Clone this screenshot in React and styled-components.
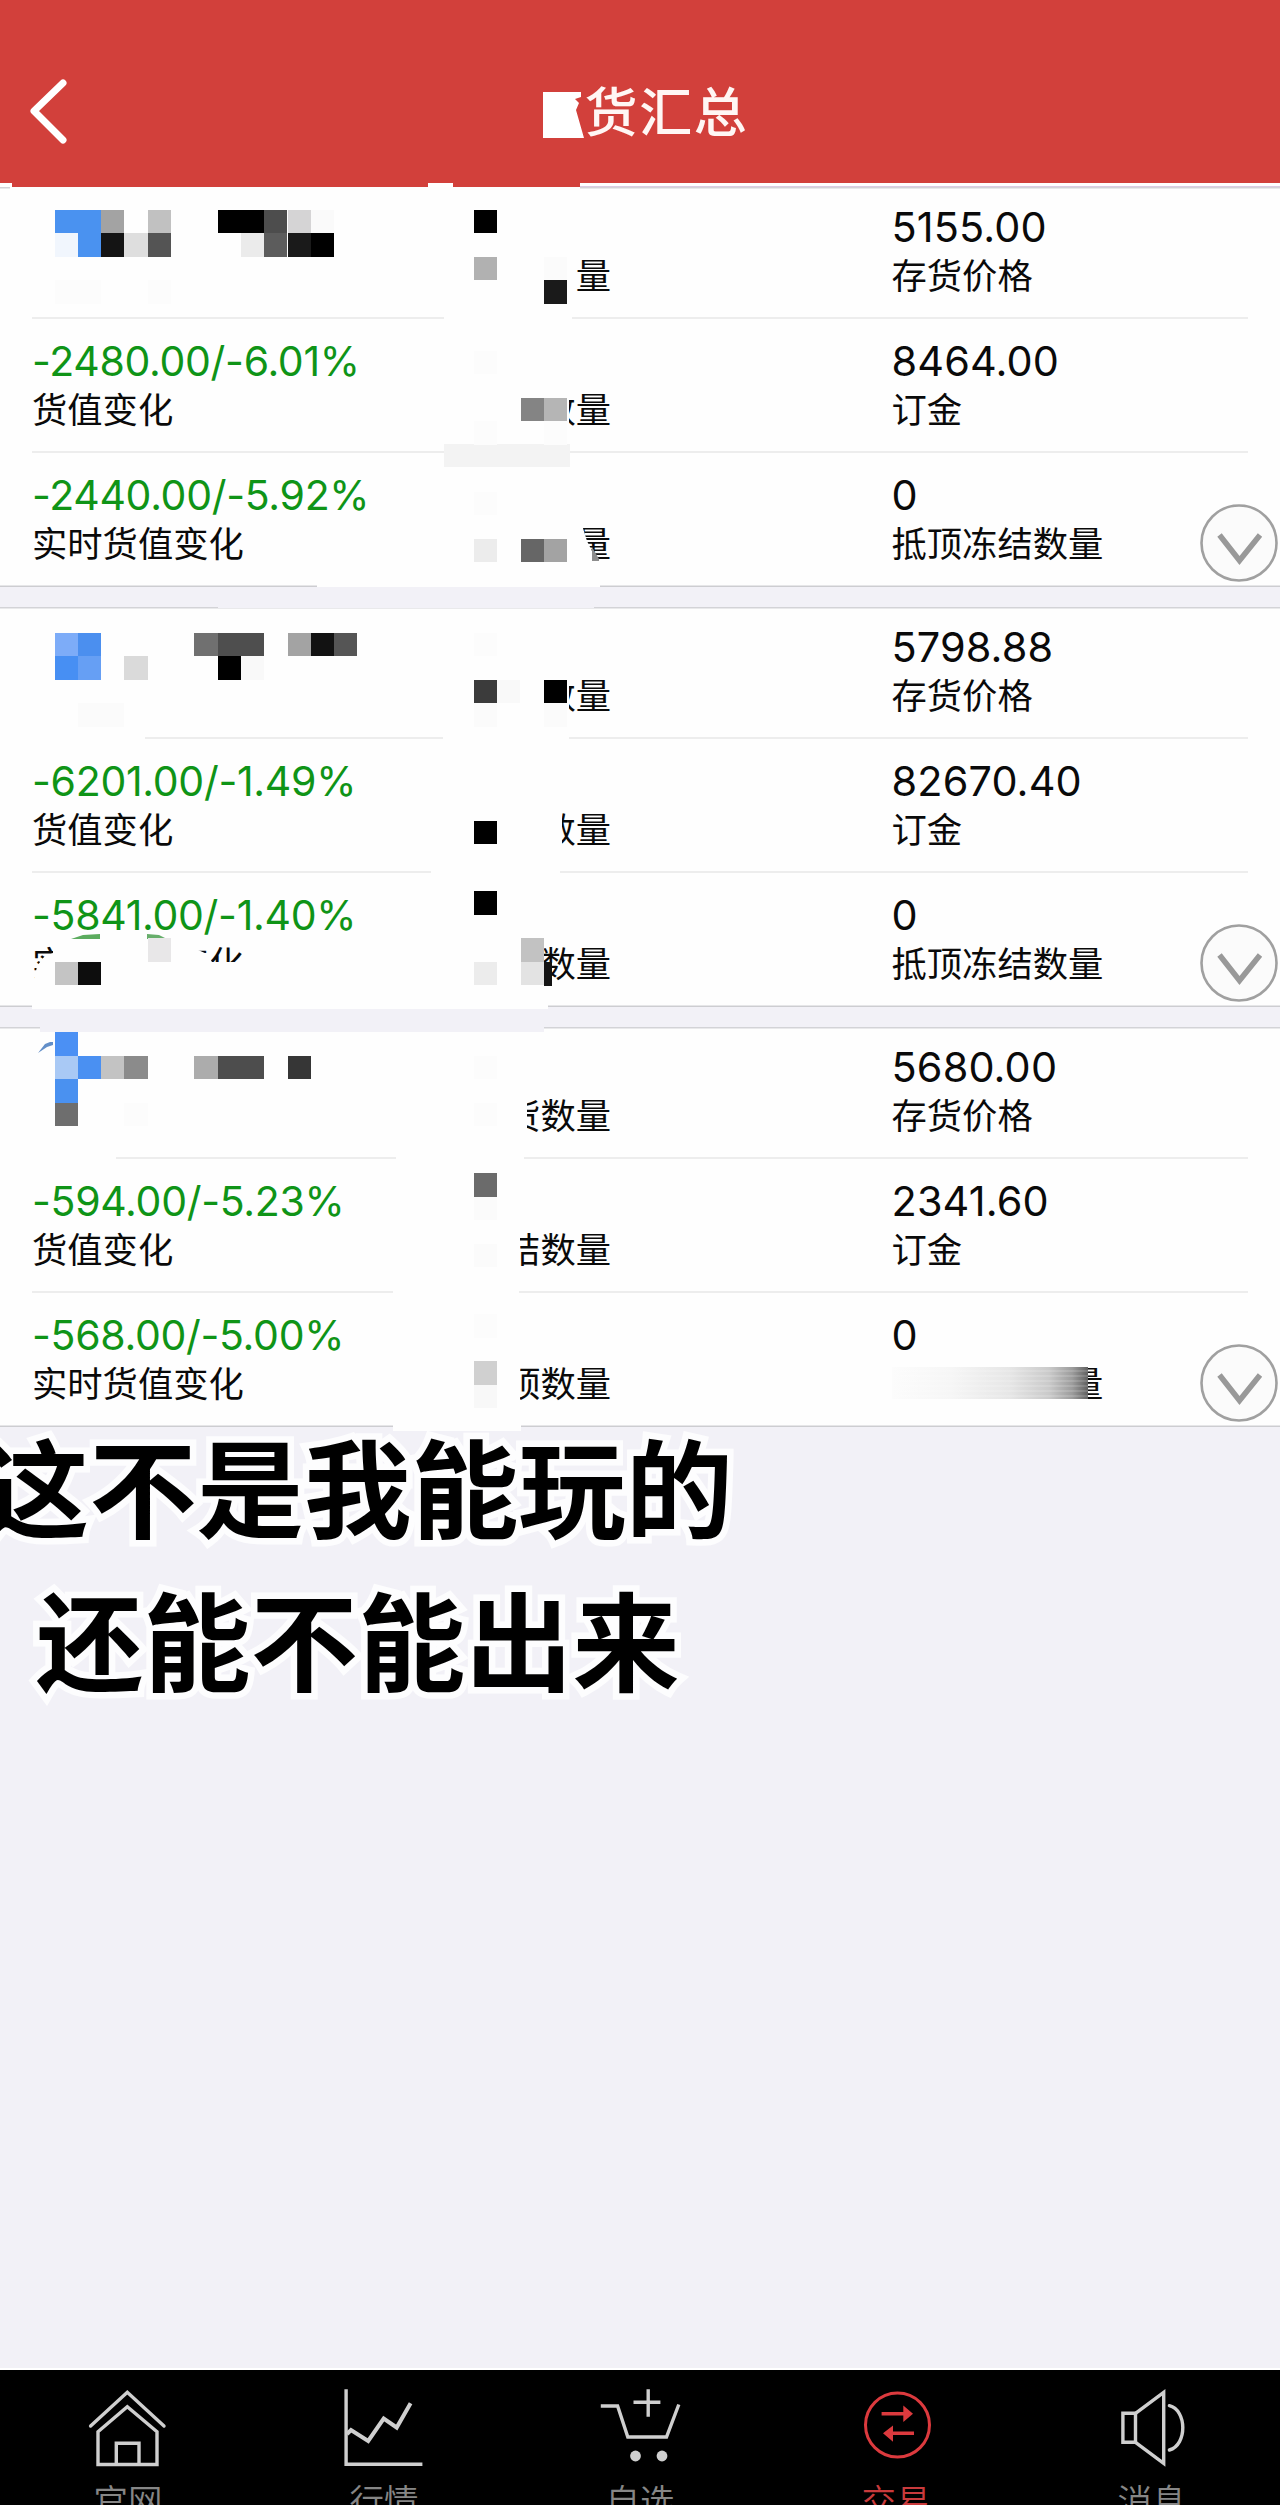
import React from 'react';
import styled, { createGlobalStyle, css } from 'styled-components';

const GlobalStyle = createGlobalStyle`
  *, *::before, *::after { box-sizing: border-box; }
  body {
    margin: 0;
    background: #f2f1f7;
    font-family: Inter, "Noto Sans CJK SC", sans-serif;
  }
`;

const Page = styled.div`
  position: relative;
  display: flex;
  flex-direction: column;
  width: 1280px;
  height: 2505px;
  overflow: hidden;
  background: #f2f1f7;
`;

const Header = styled.header`
  display: grid;
  grid-template-columns: 100px 1fr 100px;
  align-items: center;
  height: 187px;
  flex: none;
  padding-top: 36px;
  background: #d2403b;
`;

const BackButton = styled.button`
  display: flex;
  width: 60px;
  height: 70px;
  margin-left: 19px;
  padding: 0;
  border: 0;
  background: none;
`;

const Title = styled.h1`
  margin: -5px 0 0;
  padding-left: 53px;
  text-align: center;
  color: #fff6f4;
  font: 500 53px/78px "Noto Sans CJK SC", sans-serif;
  letter-spacing: 1.6px;
`;

const List = styled.main`
  display: flex;
  flex-direction: column;
  gap: 20px;
  flex: none;
`;

const Card = styled.section`
  position: relative;
  display: flex;
  flex-direction: column;
  height: 400px;
  padding: 0 32px;
  background: #fefefe;
  box-shadow: inset 0 1.5px #d3d3d7, inset 0 -1.5px #cdcdd1;
`;

const Row = styled.div`
  display: grid;
  grid-template-columns: 400px 179px 1fr;
  align-items: end;
  height: ${(p) => (p.$first ? 132 : 134)}px;
  padding-bottom: ${(p) => (p.$last ? 19 : 17)}px;
  ${(p) => !p.$last && css`border-bottom: 2px solid #ededed;`}
`;

const Cell = styled.div`
  display: flex;
  flex-direction: column;
  padding-left: ${(p) => (p.$right ? 280.5 : 0)}px;
  align-items: ${(p) => (p.$end ? 'flex-end' : 'flex-start')};
`;

const Value = styled.span`
  margin-bottom: -4px;
  color: ${(p) => (p.$down ? '#0f9417' : '#0a0a0a')};
  font-size: ${(p) => (p.$down ? 41 : 41.4)}px;
  line-height: 50px;
  letter-spacing: ${(p) => (p.$down ? '-0.3px' : '0.15px')};
  white-space: nowrap;
`;

const Label = styled.span`
  color: #0a0a0a;
  font: 400 35.3px/52px "Noto Sans CJK SC", sans-serif;
  white-space: nowrap;
`;

const ClippedLabel = styled(Label)`
  clip-path: inset(0 0 0 calc(100% - ${(p) => p.$w}px));
`;

const Expand = styled.button`
  position: absolute;
  top: 317px;
  right: 2px;
  width: 78px;
  height: 78px;
  padding: 0;
  border: 0;
  background: none;
`;

const Overlay = styled.div`
  position: absolute;
  inset: 0;
  pointer-events: none;
`;

const Patch = styled.div`
  position: absolute;
  left: ${(p) => p.$x}px;
  top: ${(p) => p.$y}px;
  width: ${(p) => p.$w}px;
  height: ${(p) => p.$h}px;
  background: ${(p) => p.$fill || '#fefefe'};
  ${(p) => p.$clip && css`clip-path: polygon(${p.$clip});`}
`;

/* One square of the pixelated privacy mask; columns and rows sit on a fixed grid. */
const Tile = styled.div`
  position: absolute;
  left: ${(p) => 54.5 + p.$c * 23.3}px;
  top: ${(p) => 209.5 + p.$r * 23.5}px;
  width: ${(p) => (p.$n || 1) * 23.3}px;
  height: 23.5px;
  background: ${(p) => p.$fill};
`;

const Caption = styled.p`
  position: absolute;
  left: ${(p) => p.$x}px;
  top: ${(p) => p.$y}px;
  margin: 0;
  color: #000;
  font: 700 107.3px/156px "Noto Sans CJK SC", sans-serif;
  white-space: nowrap;
  -webkit-text-stroke: 13px #fdfdfe;
  paint-order: stroke fill;
  stroke-linejoin: round;
`;

const TabBar = styled.nav`
  display: grid;
  grid-template-columns: repeat(5, 1fr);
  height: 137px;
  flex: none;
  margin-top: auto;
  border-top: 2px solid #fff;
  background: #000;
`;

const Tab = styled.a`
  display: flex;
  flex-direction: column;
  align-items: center;
  padding-top: 18px;
  height: 180px;
  color: ${(p) => (p.$active ? '#dc3a3e' : '#cfcfcf')};
`;

const TabIcon = styled.svg`
  width: 80px;
  height: 80px;
  flex: none;
  overflow: visible;
  fill: none;
  stroke: currentColor;
  stroke-width: 3.4;
`;

const TabLabel = styled.span`
  margin-top: 5px;
  color: ${(p) => (p.$active ? '#c93a3c' : '#868686')};
  font: 350 34.5px/52px "Noto Sans CJK SC", sans-serif;
`;

const cards = [
  {
    rows: [
      { mid: '量', w: 36, value: '5155.00', label: '存货价格' },
      { change: '-2480.00/-6.01%', name: '货值变化', mid: '数量', w: 42, value: '8464.00', label: '订金' },
      { change: '-2440.00/-5.92%', name: '实时货值变化', mid: '量', w: 36, value: '0', label: '抵顶冻结数量' },
    ],
  },
  {
    rows: [
      { mid: '数量', w: 42, value: '5798.88', label: '存货价格' },
      { change: '-6201.00/-1.49%', name: '货值变化', mid: '数量', w: 49, value: '82670.40', label: '订金' },
      { change: '-5841.00/-1.40%', name: '实时货值变化', mid: '数量', w: 71, value: '0', label: '抵顶冻结数量' },
    ],
  },
  {
    rows: [
      { mid: '货数量', w: 84, value: '5680.00', label: '存货价格' },
      { change: '-594.00/-5.23%', name: '货值变化', mid: '结数量', w: 91, value: '2341.60', label: '订金' },
      { change: '-568.00/-5.00%', name: '实时货值变化', mid: '顶数量', w: 91, value: '0', label: '抵顶冻结数量' },
    ],
  },
];

/* column, row, colour, span */
const tiles = [
  [0, 0, '#4a92f0', 2], [2, 0, '#a3a3a3'], [4, 0, '#c1c1c1'], [7, 0, '#000', 2], [9, 0, '#4d4d4d'], [10, 0, '#d5d4d5'], [11, 0, '#fafafa'],
  [0, 1, '#f1f6fd'], [1, 1, '#4a92f0'], [2, 1, '#141414'], [3, 1, '#dedede'], [4, 1, '#545454'],
  [8, 1, '#ebebeb'], [9, 1, '#5c5c5c'], [10, 1, '#1a1a1a'], [11, 1, '#000'],
  [0, 3, '#fcfcfc', 2], [4, 3, '#fcfcfc'],
  [18, 0, '#000'], [18, 2, '#b1b1b1'], [21, 2, '#fbfbfb'], [21, 3, '#1a1a1a'],
  [18, 6, '#fcfcfc'], [20, 8, '#848484'], [21, 8, '#b5b5b5'], [18, 9, '#fcfcfc'], [21, 9, '#fcfcfc'],
  [18, 12, '#fcfcfc'], [18, 14, '#ececec'], [20, 14, '#666'], [21, 14, '#a3a3a3'],
  [0, 18, '#7dacf8'], [1, 18, '#4b8fef'], [6, 18, '#707070'], [7, 18, '#4e4e4e', 2], [10, 18, '#a3a3a3'], [11, 18, '#121212'], [12, 18, '#555'],
  [0, 19, '#478ff3'], [1, 19, '#669ff4'], [3, 19, '#dadada'], [7, 19, '#000'], [8, 19, '#f9f9f9'],
  [1, 21, '#fbfbfb', 2], [18, 18, '#fcfcfc'],
  [18, 20, '#3b3b3b'], [19, 20, '#f9f9f9'], [21, 20, '#000'], [18, 21, '#fbfbfb'], [21, 21, '#fbfbfb'],
  [18, 26, '#000'], [18, 29, '#000'], [4, 31, '#e8e7e8'], [20, 31, '#c2c2c2'],
  [0, 32, '#c4c4c4'], [1, 32, '#0d0d0d'], [18, 32, '#ececec'], [20, 32, '#e3e3e3'],
  [0, 35, '#4b90f4'], [0, 36, '#a9c9f5'], [1, 36, '#4a90f2'], [2, 36, '#c3c3c3'], [3, 36, '#8b8b8b'],
  [6, 36, '#acacac'], [7, 36, '#4d4d4d', 2], [10, 36, '#363636'],
  [0, 37, '#4a91f0'], [0, 38, '#6e6e6e'], [3, 38, '#fcfcfc'],
  [18, 36, '#fcfcfc'], [18, 38, '#fcfcfc'], [18, 41, '#6b6b6b'], [18, 42, '#fbfbfb'], [18, 44, '#fbfbfb'],
  [18, 47, '#fcfcfc'], [18, 49, '#d0d0d0'], [18, 50, '#f8f8f8'],
];

const LILAC = '#f2f1f7';

/* Areas wiped out by the brush: x, y, width, height, colour, clip polygon */
const patches = [
  [0, 183, 12, 4, '#fff'], [428, 183, 25, 4, '#fff'], [580, 183, 700, 2.5, '#fff'],
  [580, 185.5, 700, 1.5, '#dccbe3'],
  [543, 92, 41, 46, '#fff', '0 0, 38px 0, 38px 5px, 32px 7px, 36px 11px, 33px 18px, 41px 46px, 0 46px'],
  [10, 187, 570, 3],
  [444, 316, 128, 4], [444, 444, 126, 23, '#f3f3f3'],
  [574, 525, 26, 44, '#fefefe', '0 0, 8px 0, 13px 16px, 20px 30px, 20px 44px, 0 44px'],
  [592, 547, 7, 14, '#8d8d8d', '0 0, 7px 12px, 7px 14px, 0 14px'],
  [317, 584, 283, 3],
  [218, 606, 376, 2, LILAC],
  [20, 736, 125, 4], [443, 736, 126, 4], [431, 870, 129, 4],
  [34, 942, 210, 40, '#fefefe', '0 40px, 3px 24px, 10px 15px, 19px 11px, 19px 0, 156px 0, 162px 7px, 173px 12px, 178px 20px, 210px 20px, 210px 40px'],
  [71, 934, 29, 5, '#5cac5f', '0 100%, 12px 1px, 100% 0, 100% 100%'],
  [147, 934, 20, 5, '#67ae6b', '0 0, 60% 20%, 100% 100%, 0 100%'],
  [32, 1004, 516, 5], [40, 1025, 504, 7, LILAC],
  [20, 1156, 96, 4], [396, 1156, 128, 4], [393, 1290, 126, 4],
  [38, 1042, 16, 11, '#638fc8', '0 100%, 7px 2px, 12px 0, 15px 0, 15px 3px, 9px 5px'],
  [393, 1424, 128, 7],
  [543.5, 962, 8, 23.5, '#141414'],
  [888, 1360, 200, 44],
];

const Smudge = styled.div`
  position: absolute;
  left: 892px;
  top: 1367px;
  width: 196px;
  height: 32px;
  background:
    repeating-linear-gradient(rgba(255, 255, 255, 0) 0 3px, rgba(255, 255, 255, 0.14) 3px 5px),
    linear-gradient(90deg, #fcfcfc, #f6f6f6 30%, #e6e6e6 60%, #cacaca 80%, #9c9c9c 92%, #606060);
`;

const tabs = [
  {
    label: '官网',
    icon: (
      <>
        <path d="M2.6 38 39.3 4.3 76 38" strokeLinecap="round" />
        <path d="M10 76.5V43.7L39.3 18.7 69 43.7V76.5Z" />
        <path d="M28.3 76V55.3H51V76" />
      </>
    ),
  },
  {
    label: '行情',
    icon: (
      <>
        <path d="M2.1 1.3V76.3H78.4" />
        <path d="M3 46 7 42 24.2 53 39.7 30.5 52.7 39.5 66.6 15.3" strokeWidth="4" />
      </>
    ),
  },
  {
    label: '自选',
    icon: (
      <>
        <path d="M.8 18H17.6L27.8 49H66.5L78.8 16.5" />
        <path d="M48.2 1.3V28.7M33.5 14.3H60.4" />
        <circle cx="35.5" cy="68" r="5.4" fill="currentColor" stroke="none" />
        <circle cx="62" cy="68" r="5.4" fill="currentColor" stroke="none" />
      </>
    ),
  },
  {
    label: '交易',
    active: true,
    icon: (
      <>
        <circle cx="41.5" cy="37" r="32" strokeWidth="3" />
        <path d="M25.6 25.8H49M58 45.3H36" />
        <path d="M47.3 17.5 57 25.8 47.3 34ZM37 37.5 27 45.3 37 53.7Z" fill="currentColor" stroke="none" />
      </>
    ),
  },
  {
    label: '消息',
    icon: (
      <>
        <path d="M10.9 25.3H23.5V54.3H10.9Z" />
        <path d="M23.5 25.3 51.7 4.3V75.3L23.5 54.3" />
        <path d="M57.4 17.7C75 22 75.500 57 57.4 62" strokeLinecap="round" />
      </>
    ),
  },
];

function StockCard({ rows }) {
  return (
    <Card>
      {rows.map((row, i) => (
        <Row key={i} $first={i === 0} $last={i === rows.length - 1}>
          <Cell>
            {row.change && <Value $down>{row.change}</Value>}
            {row.name && <Label>{row.name}</Label>}
          </Cell>
          <Cell $end>
            <ClippedLabel $w={row.w}>{row.mid}</ClippedLabel>
          </Cell>
          <Cell $right>
            <Value>{row.value}</Value>
            <Label>{row.label}</Label>
          </Cell>
        </Row>
      ))}
      <Expand aria-label="展开">
        <svg width="78" height="78" viewBox="0 0 78 78" fill="none">
          <circle cx="39" cy="39" r="37.5" fill="#fbfbfb" stroke="#a0a0a0" strokeWidth="2.6" />
          <path d="M19.500 31 39.500 56.500 60 31" stroke="#999" strokeWidth="5.6" />
        </svg>
      </Expand>
    </Card>
  );
}

export default function App() {
  return (
    <Page>
      <GlobalStyle />
      <Header>
        <BackButton aria-label="返回">
          <svg width="60" height="70" viewBox="0 0 60 70" fill="none">
            <path d="M44 6 15 34 44 63" stroke="#fff" strokeWidth="7" strokeLinecap="round" strokeLinejoin="round" />
          </svg>
        </BackButton>
        <Title>货汇总</Title>
      </Header>
      <List>
        {cards.map((card, i) => (
          <StockCard key={i} rows={card.rows} />
        ))}
      </List>
      <Overlay>
        {patches.map(([x, y, w, h, fill, clip], i) => (
          <Patch key={i} $x={x} $y={y} $w={w} $h={h} $fill={fill} $clip={clip} />
        ))}
        {tiles.map(([c, r, fill, n], i) => (
          <Tile key={i} $c={c} $r={r} $fill={fill} $n={n} />
        ))}
        <Smudge />
        <Caption $x={-18} $y={1406}>这不是我能玩的</Caption>
        <Caption $x={36} $y={1559}>还能不能出来</Caption>
      </Overlay>
      <TabBar>
        {tabs.map((tab) => (
          <Tab key={tab.label} $active={tab.active}>
            <TabIcon viewBox="0 0 80 80">{tab.icon}</TabIcon>
            <TabLabel $active={tab.active}>{tab.label}</TabLabel>
          </Tab>
        ))}
      </TabBar>
    </Page>
  );
}
